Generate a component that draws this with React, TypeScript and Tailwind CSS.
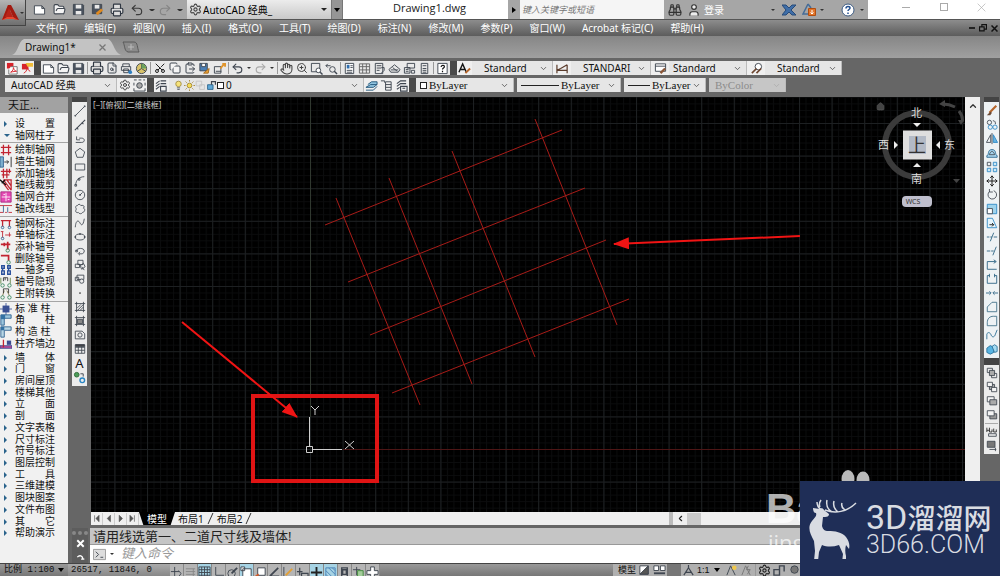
import { type ReactNode } from 'react';
import {
  Binoculars,
  ChevronDown,
  ChevronLeft,
  ChevronUp,
  ClipboardPaste,
  Copy,
  FileSearch,
  FolderOpen,
  Hand,
  House,
  Move,
  Printer,
  Redo2,
  Save,
  Scissors,
  Settings,
  Undo2,
  User,
  ZoomIn,
} from 'lucide-react';

const MENUS = ['文件(F)', '编辑(E)', '视图(V)', '插入(I)', '格式(O)', '工具(T)', '绘图(D)', '标注(N)', '修改(M)', '参数(P)', '窗口(W)', 'Acrobat 标记(C)', '帮助(H)'];

// 14x14 line icon
function Ic({ children, size = 13, stroke = '#3f4650' }: { children: ReactNode; size?: number; stroke?: string }) {
  return (
    <svg width={size} height={size} viewBox="0 0 14 14" fill="none" stroke={stroke} strokeWidth="1" className="shrink-0">
      {children}
    </svg>
  );
}

const page = (
  <Ic>
    <path d="M1.500 3h8l3 3v6h-11zM9.500 3v3h3" fill="#fff" />
  </Ic>
);
const folder = <FolderOpen size={13} color="#3f4650" fill="#f4f4f4" />;
const disk = (
  <Ic>
    <path d="M1.500 1.500h10l1 1v10h-11z" fill="#4a525e" />
    <path d="M4 2h6v4H4zM4 8.500h6v4H4z" fill="#e8e8e8" stroke="none" />
  </Ic>
);
const printer = <Printer size={14} color="#2f3742" fill="#ddd" />;
const dot = <span className="block border-x-2 border-t-2 border-x-transparent border-t-[#333]" />;

type Item = { id: string; icon: ReactNode; narrow?: boolean } | 'sep';

const STANDARD: Item[] = [
  { id: '新建', icon: page },
  { id: '打开', icon: folder },
  { id: '保存', icon: disk },
  'sep',
  { id: '打印', icon: printer },
  { id: '打印预览', icon: <FileSearch size={12} color="#3f4650" /> },
  { id: '发布', icon: <Ic><path d="M3 5V2h7v3M1.500 5h10v4h-10zM4 7.500h5v4H4z" /><circle cx="11" cy="11" r="2" fill="#2f7fc1" stroke="none" /></Ic> },
  { id: '3DDWF', icon: <Ic><circle cx="7" cy="7" r="5.500" fill="#d9c36a" /><path d="M7 1.500v5.500l4.500 3M7 7 2.500 10" /><path d="M7 2a5 5 0 0 1 5 5H7z" fill="#6ba35c" stroke="none" /></Ic> },
  'sep',
  { id: '剪切', icon: <Scissors size={12} color="#222" className="-rotate-90" /> },
  { id: '复制', icon: <Copy size={12} color="#3f4650" fill="#f4f4f4" /> },
  { id: '粘贴', icon: <ClipboardPaste size={12} color="#3f4650" /> },
  { id: '特性匹配', icon: <Ic><path d="M2 1.500h8v8H2z" fill="#4b7fb5" /><path d="M4 2v3h4V2" fill="#fff" /><path d="m6 12 6-5-1 5z" fill="#e8a33a" stroke="#a86a1c" /></Ic> },
  { id: '块编辑器', icon: <Ic><path d="M1.500 5h7v7h-7zM3 10h6" /><path d="m8 7 4-5M10 2h3v3" stroke="#e0952c" strokeWidth="2" /></Ic> },
  'sep',
  { id: '放弃', icon: <Undo2 size={13} color="#3f4650" /> },
  { id: '放弃列表', icon: dot, narrow: true },
  { id: '重做', icon: <Redo2 size={13} color="#aaa" /> },
  { id: '重做列表', icon: dot, narrow: true },
  'sep',
  { id: '平移', icon: <Hand size={13} color="#444" /> },
  { id: '实时缩放', icon: <ZoomIn size={12} color="#444" /> },
  { id: '窗口缩放', icon: <Ic><path d="M1.500 1.500h9v9h-9z" /><circle cx="9" cy="9" r="2.500" fill="#fff" /><path d="m11 11 2.500 2.500" strokeWidth="1.500" /></Ic> },
  { id: '缩放上一个', icon: <Ic><path d="M1 4h5M1 4l2-2M1 4l2 2" /><circle cx="8" cy="8" r="3" /><path d="m10 10 3 3" strokeWidth="1.500" /></Ic> },
  'sep',
  { id: '特性', icon: <Ic><path d="M2.500 1.500h9v11h-9z" fill="#fff" /><path d="M4 3h3v4H4z" fill="#2f6faf" stroke="none" /><path d="M8 4h2.500M8 6h2.500M4 9h6M4 11h6" /></Ic> },
  { id: '设计中心', icon: <Ic><path d="M1.500 2h11v10h-11zM1.500 5h11M1.500 8.500h11M5 2v10M9 2v10" stroke="#666" /></Ic> },
  { id: '工具选项板', icon: <Ic><path d="M2.500 1.500h8v11h-8zM4 4h5M4 6.500h5M4 9h3" /><path d="M9 6h3v3l-3 3" /></Ic> },
  { id: '图纸集', icon: <Ic><path d="m1 8 6-5 6 5-2 3H3zM3 8.500h8M5 6l5 4" /></Ic> },
  { id: '标记集', icon: <Ic><path d="M4.500 1.500h8v5h-8zM1.500 6h6v6h-6zM9 9h3.500v3H9zM3 8h3M3 10h3" /></Ic> },
  { id: '计算器', icon: <Ic><path d="M3.500 1.500h7v11h-7zM5 4h4M5 7h4M5 9h4M5 11h4" /></Ic> },
  'sep',
  { id: '帮助', icon: <Ic><path d="M2 1.500h10v11H2z" fill="#fff" /><path d="M5.500 5.500c0-2.500 3.500-2.500 3.500-.5 0 1.500-2 1.500-2 3M7 9.500V11" stroke="#111" strokeWidth="1.300" /></Ic> },
];

const DRAW: [string, ReactNode][] = [
  ['直线', <path d="m2 12 10-10M1 12h1v1H1zM12 1h1v1h-1z" />],
  ['构造线', <path d="m1 13 12-12M3 10l2 2M9 4l2 2" strokeWidth="1.200" />],
  ['多段线', <path d="M2 11h7c4 0 4-5 0-5H6M3 4v4h4" />],
  ['多边形', <path d="m7 1.500 5.500 4.200-2 6.300h-7l-2-6.300z" />],
  ['矩形', <path d="M1.500 3.500h11v7h-11z" />],
  ['圆弧', <path d="M2 12C2 6 6 2 12 2M1 11h2v2H1zM5 4h2v2H5z" />],
  ['圆', <><circle cx="7" cy="7" r="5.500" /><path d="m7 7 3-3M6.500 6.500h1v1h-1z" /></>],
  ['修订云线', <path d="M4 3c1-2 3-2 4 0 3-1 5 1 3 3 3 1 1 5-1 5-1 2-4 2-5 0-3 1-4-2-2-4C1 5 2 3 4 3z" />],
  ['样条曲线', <path d="M1.500 12C2 4 5 3 7 7s4 2 5-5" />],
  ['椭圆', <><ellipse cx="7" cy="7" rx="5.500" ry="3.500" /><path d="M1 6.500h1v1H1zM12 6.500h1v1h-1zM6.500 3h1v1h-1z" /></>],
  ['椭圆弧', <path d="M3 7c0-4 9-4 9 0 0 3-3 4-6 3M7 8l-2 2 2 2M2 6h2v2H2z" />],
  ['插入块', <path d="M4.500 1.500h6v5h-6zM1.500 6h5v4h-5zM7 8l4-3 2 4-4 3zM9 9l3 4" />],
  ['创建块', <><path d="M3.500 2.500h8v5h-8zM1.500 5h4v4h-4z" fill="#eee" /><circle cx="9" cy="9.500" r="2.500" fill="#eee" /></>],
  ['点', <circle cx="7" cy="7" r="1" fill="#333" stroke="none" />],
  ['图案填充', <path d="M3 1v12M11 1v12M1 3h12M1 11h12M4 8l4-4M4 11l7-7M7 11l4-4" />],
  ['渐变色', <><path d="M3 1v12M11 1v12M1 3h12M1 11h12" /><path d="M4 5h6v5H4z" fill="#888" /></>],
  ['面域', <><path d="M1.500 2.500h8l3 3v6h-11z" /><circle cx="7" cy="7" r="2.500" /></>],
  ['表格', <><path d="M1.500 2h11v10h-11zM1.500 5h11M1.500 8.500h11M5 4v8M9 4v8" /><path d="M2 2h10v2H2z" fill="#444" /></>],
];

const MODIFY: [string, ReactNode][] = [
  ['删除', <><path d="M4 9 12 1" stroke="#b5652b" strokeWidth="2.500" /><path d="M1 12h4l2-3-2-1z" fill="#6a4a35" stroke="none" /></>],
  ['复制对象', <><circle cx="4" cy="4" r="2.500" /><circle cx="5" cy="9.500" r="2.500" stroke="#2a86c4" /><circle cx="10.500" cy="9.500" r="2.500" stroke="#2a86c4" /><path d="M8 2c3 0 3 2 3 4" /></>],
  ['镜像', <><path d="M5.500 2v9h-5z" /><path d="M8.500 2v9h5z" fill="#65b5e4" stroke="#2a86c4" /><path d="M7 0v13" /></>],
  ['偏移', <><path d="M1 12h12v-2c-3 0 0-7-6-7s-3 7-6 7z" fill="#a8d6ef" stroke="#26648c" /><path d="M4 9h6c-1-5-5-5-6 0z" /></>],
  ['阵列', <><path d="M1.500 1.500h4v4h-4z" /><path d="M8.500 1.500h4v4h-4zM1.500 8.500h4v4h-4zM8.500 8.500h4v4h-4z" stroke="#2a86c4" fill="#cfe8f4" /></>],
  ['移动', <Move size={14} x={0} y={0} color="#222" />],
  ['旋转', <path d="M4 3a5 5 0 1 0 5-1M4 0v3.500h4" />],
  ['缩放', <><path d="M1.500 1.500h11v11h-11z" fill="#9fd3ec" stroke="#2a86c4" /><path d="M1.500 6.500h6v6h-6z" fill="#fff" /></>],
  ['拉伸', <><path d="M1.500 1.500h6l5 11h-11z" stroke="#2a86c4" fill="#e5f4fb" /><path d="M4 9h5M7 7l2 2-2 2" stroke="#111" /></>],
  ['修剪', <path d="M1 7h3M5 7h2M9 7h4M5 12 9 2" stroke="#28607f" />],
  ['延伸', <path d="M1 7h4M6 7h3M8 12l4-10" stroke="#28607f" />],
  ['打断于点', <path d="M11 3H1.500v9h11M9 1l3 2-3 2" stroke="#245d80" />],
  ['打断', <path d="M4 3H1.500v9h11V3H10M4 1v4M10 1v4" stroke="#245d80" />],
  ['合并', <path d="M0 7h5M14 7H9M4 5l2 2-2 2M10 5 8 7l2 2" stroke="#245d80" />],
  ['倒角', <path d="M1.500 12.500V7L7 1.500h5.500v11z" stroke="#3d6d85" />],
  ['圆角', <path d="M1.500 12.500V9c0-5 3-7.500 7-7.500h4v11z" stroke="#3d6d85" />],
  ['光顺曲线', <path d="M1 12V6c1-3 4-2 5 1s4 3 5-1l2-5" stroke="#266a91" />],
  ['分解', <><path d="m1 6 4-3 4 2v6l-4 2-4-2z" fill="#58b4e2" stroke="#256f99" /><path d="m7 4 3-2 3 2v6l-3 1z" fill="#a3daf2" stroke="#256f99" /></>],
];

const ORDER: [string, ReactNode][] = [
  ['前置', <><path d="M1.500 1.500h6v5h-6zM6.500 7.500h6v5h-6z" /><path d="M4 4h6v6H4z" fill="#aaa" /></>],
  ['后置', <><path d="M4 4h6v6H4z" fill="#aaa" /><path d="M1.500 1.500h6v5h-6zM6.500 7.500h6v5h-6z" fill="#f4f4f4" /></>],
  ['置于对象之上', <><path d="M1.500 2h8v6h-8z" fill="#f4f4f4" /><path d="M4.500 5.500h8v6h-8z" fill="#aaa" /></>],
  ['置于对象之下', <><path d="M4.500 5.500h8v6h-8z" fill="#999" /><path d="M1.500 2h8v6h-8z" fill="#f4f4f4" /></>],
];

const ORDER_MORE: [string, ReactNode][] = [
  ['文字前置', <><path d="M1 2v5M4 2v5h3V4M1 5h3M9 3v4h3V4" stroke="#222" /><path d="M3 9h9v3H3z" /></>],
  ['图案填充后置', <><path d="M1.500 1.500h9v7h-9z" fill="#777" /><path d="M4 11h8M11 9v4" /></>],
];

const RED = '#c22432';
const BLUE = '#2c5f8f';

type Entry = { name: string; icon?: ReactNode; open?: boolean };

const PALETTE: Entry[][] = [
  [{ name: '设　　置' }, { name: '轴网柱子', open: true }],
  [
    { name: '绘制轴网', icon: <path d="M4 1v12M10 1v12M1 4h12M1 10h12" stroke={RED} strokeWidth="1.500" /> },
    { name: '墙生轴网', icon: <><path d="M0 1h4v12H0z" fill="#7fb0cf" stroke={BLUE} /><path d="M5 7h5M8 5l2 2-2 2M13 1v12" stroke="#222" /></> },
    { name: '添加轴线', icon: <path d="M4 1v11M8 1v11M1 4h12M2 8h9M11 1v5" stroke={RED} strokeWidth="1.500" /> },
    { name: '轴线裁剪', icon: <><path d="M4 1h9v12M4 1l9 12M8 1l5 7M4 5l6 8" stroke={RED} strokeWidth="1.500" /><path d="m0 1 7 6M2 5l4-4" stroke="#111" strokeWidth="1.500" /></> },
    { name: '轴网合并', icon: <><path d="M1 1h12v12H1z" fill="#e44ab4" stroke="#a5287c" /><path d="M2 7h10M7 2v10M4 4h2M9 10h2" stroke="#fff" /></> },
    { name: '轴改线型', icon: <><path d="M0 3h14M0 11h4M6 11h2M10 11h4" stroke={RED} /><path d="M4 3v8M9 5v6" stroke={BLUE} /></> },
  ],
  [
    { name: '轴网标注', icon: <><path d="M1 3h12M3 3v7M11 3v7" stroke={RED} strokeWidth="1.500" /><circle cx="3" cy="11" r="1.500" stroke={BLUE} /><circle cx="11" cy="11" r="1.500" stroke={BLUE} /></> },
    { name: '单轴标注', icon: <><path d="M3 3v7M1 3h3M6 7h7M11 4v5" stroke={RED} /><circle cx="3" cy="11" r="1.500" stroke={BLUE} /></> },
    { name: '添补轴号', icon: <><path d="M1 4h11M9 1v9M5 2v4" stroke={RED} strokeWidth="2" /><circle cx="9" cy="11" r="2" stroke="#36875e" /></> },
    { name: '删除轴号', icon: <><path d="M1 3h9v6" stroke={RED} strokeWidth="2" /><circle cx="10" cy="11" r="2" stroke="#36875e" /></> },
    { name: '一轴多号', icon: <path d="M2 2h3v3H2zM9 2h3v3H9zM2 8h3v4H2zM9 8h3v4H9zM3 5v3M10 5v3" stroke="#284f9b" strokeWidth="1.600" /> },
    { name: '轴号隐现', icon: <><path d="M1 2v7M12 2v7" stroke="#5b7f3e" /><path d="M4 6V2h5v4M6 2v3" stroke="#333" /><circle cx="3" cy="11" r="2" stroke="#36875e" /><circle cx="11" cy="11" r="2" stroke="#36875e" /></> },
    { name: '主附转换', icon: <><path d="m3 9 2-6M8 3l3 6" stroke="#7c7240" /><path d="M4 6V1h6v5" stroke="#333" /><circle cx="3" cy="11" r="2" stroke="#36875e" /><circle cx="11" cy="11" r="2" stroke="#36875e" /></> },
  ],
  [
    { name: '标 准 柱', icon: <><path d="M3 3h8v8H3z" fill="#3a4f93" stroke="none" /><path d="M7 0v14M0 7h14" stroke="#3a4f93" /></> },
    { name: '角　　柱', icon: <><path d="M1 13V1h12v4H5v8z" fill="#9cc6dd" stroke={BLUE} /><path d="M1 1h5v5H1z" fill="#3471a3" stroke="none" /></> },
    { name: '构 造 柱', icon: <><path d="M1 13V1h12v4H5v8z" fill="#b8d6e4" stroke={BLUE} /><path d="M1 1h4v4H1z" fill="#3471a3" stroke="none" /></> },
    { name: '柱齐墙边', icon: <><path d="M0 9h14v3H0z" fill="#b94a9a" stroke="#3b4c90" /><path d="M8 3h5v5H8z" fill="#3b4c90" stroke="none" /><path d="M4 2v9" stroke={RED} strokeWidth="1.500" /></> },
  ],
];

const CLOSED = ['墙　　体', '门　　窗', '房间屋顶', '楼梯其他', '立　　面', '剖　　面', '文字表格', '尺寸标注', '符号标注', '图层控制', '工　　具', '三维建模', '图块图案', '文件布图', '其　　它', '帮助演示'];

function Combo({ label, value, className, prefix, serif, disabled }: {
  label: string; value: string; className: string; prefix?: ReactNode; serif?: boolean; disabled?: boolean;
}) {
  return (
    <div className={`relative flex items-center gap-[2px] border-r border-[#bbb] pl-1 ${disabled ? 'bg-[#c6c6c6]' : 'bg-[#e6e6e6]'} ${className}`}>
      {prefix}
      <select
        aria-label={label}
        disabled={disabled}
        className={`h-[14px] min-w-0 flex-1 appearance-none bg-transparent leading-[14px] ${serif ? "font-['Liberation_Serif'] text-[11px]" : 'text-[10px]'} ${disabled ? 'text-[#8c8c8c]' : 'text-[#111]'}`}
      >
        <option>{value}</option>
      </select>
      <ChevronDown size={9} color={disabled ? '#aaa' : '#444'} className="pointer-events-none absolute right-1" />
    </div>
  );
}

function ToolButton({ label, children, className = 'w-[15px]' }: { label: string; children: ReactNode; className?: string }) {
  return (
    <button aria-label={label} title={label} className={`flex h-[14px] shrink-0 items-center justify-center ${className}`}>
      {children}
    </button>
  );
}

const Sep = () => <span className="mx-px h-3 w-px shrink-0 bg-[#999]" />;
const Grip = () => <span className="w-[7px] shrink-0 bg-[#4a4a4a]" />;

function TitleBar() {
  return (
    <header className="relative flex h-5 shrink-0 border-b border-[#555] bg-[#a6a6a6]">
      <button aria-label="应用程序菜单" className="absolute top-0 left-0 z-10 flex h-[26px] w-[26px] items-center border-r border-b border-[#444] bg-linear-to-b from-[#b5b5b5] to-[#6f6f6f]">
        <svg width="20" height="22" viewBox="0 0 20 22">
          <path d="M2 18 8 3h3l-5 12z" fill="#e2452b" />
          <path d="M8 3h3l8 15-5-1-4-9-3 8-5 2z" fill="#a31a10" />
          <path d="m5 15 4-9 4 9z" fill="#b92318" />
          <path d="m2 18 5-3h6l5 3-5-1H7z" fill="#e8472f" />
        </svg>
        {dot}
      </button>
      <div className="ml-[30px] flex items-center">
        <ToolButton label="新建图形" className="w-[19px]">{page}</ToolButton>
        <ToolButton label="打开图形" className="w-[20px]">{folder}</ToolButton>
        <ToolButton label="保存图形" className="w-[19px]">{disk}</ToolButton>
        <ToolButton label="另存为" className="w-[19px]">
          <Ic><path d="M1.500 1.500h10v10h-10z" fill="#4a525e" /><path d="M4 2h5v4H4z" fill="#e8e8e8" stroke="none" /><path d="m6 12 6-5" stroke="#e08a20" strokeWidth="3" /></Ic>
        </ToolButton>
        <ToolButton label="打印图形" className="w-[20px]">{printer}</ToolButton>
        <ToolButton label="撤销" className="w-[20px]"><Undo2 size={14} color="#3a3a3a" /></ToolButton>
        <span className="w-2 pl-[2px]">{dot}</span>
        <ToolButton label="恢复" className="w-[20px]"><Redo2 size={14} color="#858585" /></ToolButton>
        <span className="w-2 pl-[2px]">{dot}</span>
      </div>
      <div className="relative ml-1 flex w-[144px] items-center bg-linear-to-b from-[#ececec] to-[#c9c9c9] pl-[2px]">
        <Settings size={13} color="#444" />
        <select aria-label="工作空间" className="h-4 flex-1 appearance-none pl-px text-[10px] leading-4 text-black">
          <option>AutoCAD 经典_</option>
        </select>
        <span className="pointer-events-none absolute right-1 border-x-[3px] border-t-[3px] border-x-transparent border-t-[#222]" />
      </div>
      <button aria-label="自定义快速访问工具栏" className="flex w-3 items-center justify-center border-x border-[#777] bg-[#959595]">
        <span className="border-x-[3px] border-t-4 border-x-transparent border-t-black" />
      </button>
      <h1 className="flex-1 bg-white pl-2 text-center font-['Open_Sans'] text-[11px] leading-4 text-[#222]">Drawing1.dwg</h1>
      <button aria-label="展开搜索" className="flex w-3 items-center justify-center">
        <span className="border-y-[3px] border-l-4 border-y-transparent border-l-black" />
      </button>
      <input aria-label="搜索" placeholder="键入关键字或短语" className="w-[144px] bg-[#f5f5f5] px-[2px] text-[9px] italic outline-none placeholder:text-[#777]" />
      <div className="flex w-[204px] items-center pl-[3px]">
        <ToolButton label="查找"><Binoculars size={14} color="#333" /></ToolButton>
        <ToolButton label="用户" className="ml-1 w-[15px]"><User size={14} color="#333" fill="#eee" /></ToolButton>
        <a href="#login" className="ml-[3px] text-[10px] leading-4 text-white">登录</a>
        <span className="ml-auto">{dot}</span>
        <ToolButton label="Exchange" className="ml-[6px] w-4">
          <svg width="14" height="12" viewBox="0 0 14 12">
            <path d="M0 1h4l3 3 3-3h4L9 6l5 5h-4L7 8l-3 3H0l4-5z" fill="#3f6ea8" stroke="#274a78" />
          </svg>
        </ToolButton>
        <ToolButton label="更新" className="ml-1 w-4">
          <Ic size={14}><path d="M6 1 1 11h6M6 1l3 4" stroke="#456c98" strokeWidth="1.500" /><path d="M6.500 5.500h7v7h-7z" fill="#e4762a" stroke="#b04d10" /><path d="M10 7v4M8.500 9.500 10 11l1.500-1.500" stroke="#fff" /></Ic>
        </ToolButton>
        <span className="ml-[3px]">{dot}</span>
        <ToolButton label="帮助主题" className="mr-1 ml-4 w-4">
          <Ic size={14}><circle cx="7" cy="7" r="6" fill="#fff" stroke="#3d5c83" /><path d="M5 5.500c0-3 4-2.500 4-.5 0 1.500-2 1.500-2 3M7 9.500V11" stroke="#234f8f" strokeWidth="1.500" /></Ic>
        </ToolButton>
        <span className="mr-1">{dot}</span>
      </div>
      <div className="flex w-[132px] justify-between bg-white pt-[3px] pr-[14px] pl-[34px]">
        <button aria-label="最小化" className="flex h-2 w-2 items-center"><span className="h-px w-2 bg-[#aaa]" /></button>
        <button aria-label="最大化" className="h-2 w-2 border border-[#aaa]" />
        <button aria-label="关闭" className="h-2"><Ic size={9} stroke="#aaa"><path d="m1 1 12 12M13 1 1 13" /></Ic></button>
      </div>
    </header>
  );
}

function Toolbars() {
  return (
    <div className="flex shrink-0 flex-col gap-[3px] bg-[#666] pt-[3px] pb-[5px] pl-[5px]">
      <div className="flex h-[14px]">
        <div className="flex bg-[#efefef]">
          <ToolButton label="转换为 PDF">
            <Ic><path d="M1 1h7v6H1z" fill="#d6232b" stroke="none" /><path d="M5 5h7v8H3V8" fill="#fff" stroke="#777" /><path d="M5 11c3-1 3-5 3-5s1 4 3 4-3 0-6 1z" stroke="#d6232b" /></Ic>
          </ToolButton>
          <ToolButton label="批量转换 PDF" className="w-[14px]">
            <Ic><path d="M1 2h7v6H1z" fill="#d6232b" stroke="none" /><path d="M5 1h8v4H7z" fill="#f1bd38" stroke="none" /><path d="M3 12c3-1 4-6 4-6s1 4 3 4" stroke="#d6232b" /></Ic>
          </ToolButton>
        </div>
        <Grip />
        <div className="flex items-center bg-[#e9e9e9]">
          {STANDARD.map((it, i) =>
            it === 'sep' ? <Sep key={i} /> : (
              <ToolButton key={it.id} label={it.id} className={it.narrow ? 'w-2' : 'w-[15px]'}>{it.icon}</ToolButton>
            ),
          )}
        </div>
        <Grip />
        <div className="flex items-center bg-[#efefef]">
          <ToolButton label="文字样式管理"><Ic><path d="m1 11 4-9 4 9M3 8h4" stroke="#111" strokeWidth="1.500" /><path d="m8 12 5-5" stroke="#b5652b" strokeWidth="2" /></Ic></ToolButton>
          <Combo label="文字样式" value="Standard" className="w-[81px] pl-[12px]" />
          <ToolButton label="标注样式管理" className="w-[18px]"><Ic><path d="M1 3v9M1 9h11M12 3v9M1 9l4-2M5 7l7-4" stroke="#5b3c2c" strokeWidth="1.300" /></Ic></ToolButton>
          <Combo label="标注样式" value="STANDARI" className="w-[80px] pl-[12px]" />
          <ToolButton label="表格样式管理" className="w-[18px]"><Ic><path d="M1.500 2h11v8h-11zM1.500 4.500h11" fill="#fff" /><path d="m7 12 5-5" stroke="#8b5535" strokeWidth="2.500" /></Ic></ToolButton>
          <Combo label="表格样式" value="Standard" className="w-[78px]" />
          <ToolButton label="多重引线样式管理" className="w-[18px]"><Ic><circle cx="9" cy="5" r="3.500" fill="#fff" /><path d="m2 12 5-5M7 12l5-5" stroke="#6d4630" strokeWidth="1.800" /></Ic></ToolButton>
          <Combo label="多重引线样式" value="Standard" className="w-[77px] pl-[12px]" />
        </div>
      </div>
      <div className="flex h-[14px]">
        <div className="flex bg-[#efefef]">
          <Combo label="切换工作空间" value="AutoCAD 经典" className="w-[112px] pl-[6px]" />
          <ToolButton label="工作空间设置"><Settings size={12} color="#444" /></ToolButton>
          <ToolButton label="我的工作空间"><Ic><path d="M1 1h3M6 1h3M11 1h2M1 4v3M1 10v3M13 4v3M13 10v3M1 13h12" /><circle cx="7" cy="7" r="3" fill="#aaa" /></Ic></ToolButton>
        </div>
        <Grip />
        <div className="flex bg-[#efefef]">
          <ToolButton label="图层特性管理器"><Ic><path d="M6 2h6M6 5h6M6 8h6v5H6zM1 5l4-3M1 8l4-3M1 11l4-3" strokeWidth="1.200" /></Ic></ToolButton>
          <Combo
            label="图层"
            value="0"
            className="w-[195px]"
            prefix={
              <span className="flex items-center">
                <Ic size={11}><circle cx="7" cy="5" r="3.500" fill="#f6e27a" stroke="#9b8436" /><path d="M5 10h4M5.500 12h3" /></Ic>
                <Ic size={11}><circle cx="7" cy="7" r="3" fill="#f3dc5c" stroke="#9b7c22" /><path d="M7 0v2M7 12v2M0 7h2M12 7h2M2 2l1.500 1.500M10.500 10.500 12 12M12 2l-1.500 1.500M2 12l1.500-1.500" stroke="#9b7c22" /></Ic>
                <Ic size={11} stroke="#c2c2c2"><path d="M1.500 1.500h7v6h-7zM6 6h6v6H6z" /></Ic>
                <Ic size={11}><path d="M2 6h7v6H2z" fill="#5fa8d7" stroke="#205c86" /><path d="M7 6V2h5v4" strokeWidth="1.500" /></Ic>
                <span className="h-[7px] w-[7px] border border-[#222] bg-white" />
              </span>
            }
          />
          <ToolButton label="置为当前"><Ic><path d="m1 9 5-3h7l-4 3zM3 6l4-3h6v3" fill="#8fc3df" stroke="#24587b" /><path d="m1 12h8l4-4" stroke="#24587b" /></Ic></ToolButton>
          <ToolButton label="上一个图层"><Ic><path d="M1 2h4v2M6 3h6v9H6zM6 6h6M6 9h6" /></Ic></ToolButton>
          <ToolButton label="图层状态"><Ic><path d="m2 5 4-3h6M2 8l4-3h6M2 11l3-2M6 8h7v5H6zM8 10h3" strokeWidth="1.200" /></Ic></ToolButton>
        </div>
        <Grip />
        <div className="flex">
          <Combo serif label="颜色" value="ByLayer" className="w-[98px]" prefix={<span className="h-[7px] w-[7px] border border-[#222] bg-white" />} />
          <Combo serif label="线型" value="ByLayer" className="ml-[3px] w-[104px]" prefix={<span className="h-px w-[38px] bg-[#222]" />} />
          <Combo serif label="线宽" value="ByLayer" className="ml-[3px] w-[82px]" prefix={<span className="h-px w-[22px] bg-[#222]" />} />
          <Combo serif disabled label="打印样式" value="ByColor" className="ml-[3px] w-[77px] pl-[6px]" />
        </div>
      </div>
    </div>
  );
}

function Palette() {
  return (
    <aside className="flex w-[68px] shrink-0 flex-col bg-[#f1f1f1]">
      <h2 className="h-4 bg-[#a2a2a2] pl-2 text-[11px] leading-4 text-[#111]">天正...</h2>
      <ul className="flex flex-1 flex-col pt-[5px] pb-6 font-['Liberation_Sans','Noto_Sans_CJK_SC',sans-serif] text-[10px] text-[#111]">
        {[...PALETTE, CLOSED.map((name): Entry => ({ name }))].map((group, g) => (
          <li key={g} className="contents">
            {g > 0 && <hr className={`my-px border-0 ${g < 4 ? 'h-px shrink-0 bg-[#a5a5a5]' : 'h-0'}`} />}
            {group.map((e) => (
              <button key={e.name} className="flex min-h-0 flex-1 items-center text-left leading-none whitespace-pre">
                <span className="flex w-[15px] shrink-0 items-center">
                  {e.icon ? (
                    <Ic size={12}>{e.icon}</Ic>
                  ) : e.open ? (
                    <span className="ml-1 border-x-[3px] border-t-[3px] border-x-transparent border-t-[#2a638b]" />
                  ) : (
                    <span className="ml-1 border-y-[3px] border-l-[3px] border-y-transparent border-l-[#2a638b]" />
                  )}
                </span>
                {e.name}
              </button>
            ))}
          </li>
        ))}
      </ul>
    </aside>
  );
}

function IconColumn({ items }: { items: [string, ReactNode][] }) {
  return items.map(([name, shape]) => (
    <ToolButton key={name} label={name}><Ic size={12}>{shape}</Ic></ToolButton>
  ));
}

const AXES = [
  [234, 128, 471, 33], [257, 185, 494, 91], [279, 238, 515, 143], [301, 296, 538, 202],
  [245, 101, 329, 308], [298, 81, 381, 287], [361, 54, 444, 260], [444, 22, 526, 228],
];

function Drawing() {
  return (
    <div className="relative flex-1 overflow-hidden bg-black">
      <svg className="absolute inset-0 h-full w-full">
        <defs>
          <pattern id="minor" x="219" y="352" width="6.520" height="6.520" patternUnits="userSpaceOnUse">
            <path d="M.5 0v6.520M0 .5h6.520" stroke="#0b0c0d" />
          </pattern>
          <pattern id="major" x="219" y="352" width="32.600" height="32.600" patternUnits="userSpaceOnUse">
            <path d="M.5 0v32.600M0 .5h32.600" stroke="#1d2022" />
          </pattern>
          <marker id="head" markerUnits="userSpaceOnUse" markerWidth="18" markerHeight="14" refX="15" refY="6" orient="auto">
            <path d="M0 0 16 6 0 12z" fill="#f01414" />
          </marker>
        </defs>
        <rect width="100%" height="100%" fill="url(#minor)" />
        <rect width="100%" height="100%" fill="url(#major)" />
        <path d="M219.500 0v320" stroke="#30382f" />
        <line x1="252" y1="352.500" x2="100%" y2="352.500" stroke="#4e1616" />
        {AXES.map(([x1, y1, x2, y2], i) => (
          <line key={i} x1={x1} y1={y1} x2={x2} y2={y2} stroke="#a81c18" />
        ))}
        <g stroke="#cfcfcf" fill="none">
          <path d="M218.500 320v30M222 352.500h29M215.500 349.500h6v6h-6z" />
          <path d="m220 309 4 4 4-4M224 313v5M254 344l9 8M263 344l-9 8" />
        </g>
        <rect x="162" y="299" width="124" height="85" fill="none" stroke="#e01414" strokeWidth="4" />
        <g stroke="#f01414" strokeWidth="2">
          <line x1="709" y1="139" x2="523" y2="147" markerEnd="url(#head)" />
          <line x1="91" y1="225" x2="206" y2="320" markerEnd="url(#head)" />
        </g>
      </svg>
      <p className="relative pt-[2px] pl-[2px] text-[8px] leading-3 text-[#ccc]">[−][俯视][二维线框]</p>
      <div className="absolute top-0 right-0 h-[120px] w-[100px] text-[11px] text-[#ddd]">
        <svg className="absolute inset-0" width="100" height="120" viewBox="0 0 100 120">
          <circle cx="52" cy="48" r="32" fill="none" stroke="#3b3b3b" strokeWidth="6" />
          <path d="M38 33.500h29v29H38z" fill="#dedede" />
          <path d="M44 39h17v18H44z" fill="#b3bac6" />
          <path d="m48 26h8l-4 4zM48 70h8l-4-4zM29 44v8l4-4zM75 44v8l-4-4z" fill="#eee" />
          <path d="M78 7c5 0 8 1 12 3M94 14c3 4 4 8 3 11" fill="none" stroke="#444" strokeWidth="3" />
          <path d="m80 3-6 4 6 3zM93 23l6 0-3 5zM88 82h7l-3.500 4z" fill="#444" />
        </svg>
        <House size={9} fill="#444" color="#555" className="absolute top-[5px] left-[11px]" />
        <button className="absolute top-[9px] left-[46px] leading-[14px]">北</button>
        <button className="absolute top-[75px] left-[46px] leading-[14px]">南</button>
        <button className="absolute top-[41px] left-[13px] leading-[14px]">西</button>
        <button className="absolute top-[41px] left-[79px] leading-[14px]">东</button>
        <button className="absolute top-[38px] left-[43px] text-[18px] leading-5 text-[#333]">上</button>
        <button className="absolute top-[99px] left-[37px] h-[11px] w-[30px] rounded-sm bg-[#bfbfcd] pr-2 text-[7px] leading-[11px] text-[#333]">WCS</button>
      </div>
    </div>
  );
}

function LayoutTabs() {
  const arrows = ['M4 2v10M11 2 6 7l5 5z', 'M10 2 5 7l5 5z', 'm5 2 5 5-5 5z', 'M10 2v10M3 2l5 5-5 5z'];
  return (
    <div className="flex h-[13px] items-center bg-[#efefef] text-[10px] leading-3 text-[#111]">
      {arrows.map((d, i) => (
        <button key={d} aria-label={`布局导航 ${i + 1}`} className="flex h-3 w-3 items-center justify-center border-r border-[#ccc]">
          <Ic size={9} stroke="#555"><path d={d} fill="#555" /></Ic>
        </button>
      ))}
      <button className="h-[13px] bg-black px-2 leading-3 text-white [clip-path:polygon(0_0,100%_0,88%_100%,12%_100%)]">模型</button>
      <button className="px-[3px]">布局1</button>
      <span className="mx-[3px] h-[11px] w-px -skew-x-24 bg-[#333]" />
      <button className="px-[3px]">布局2</button>
      <span className="mx-[3px] h-[11px] w-px -skew-x-24 bg-[#333]" />
      <span className="flex-1" />
      <div className="flex h-full w-[296px] items-center">
        <span className="h-full w-1 bg-[#bbb]" />
        <button aria-label="向左滚动" className="flex w-[14px] justify-center"><ChevronLeft size={9} color="#222" strokeWidth={3} /></button>
        <span className="h-3 w-[14px] bg-[#c9c9c9]" />
      </div>
    </div>
  );
}

function CommandWindow() {
  return (
    <section className="flex h-[38px] shrink-0 bg-[#666] pt-[3px]">
      <div className="mr-[2px] ml-1 flex w-4 flex-col items-center bg-[#5d5d5d]">
        <span className="h-[7px] w-full border-b-4 border-dotted border-[#888]" />
        <button aria-label="关闭命令行" className="mt-1"><Ic size={9} stroke="#fff"><path d="m2 2 10 10M12 2 2 12" strokeWidth="3" /></Ic></button>
        <span className="mt-1"><Ic size={9} stroke="#fff"><path d="M2 8c4-4 8-2 9 3M8 11h5" strokeWidth="2" /></Ic></span>
      </div>
      <div className="flex flex-1 flex-col">
        <p className="h-[17px] border-b border-[#999] bg-[#c5c5c5] pl-[3px] text-[13px] leading-4 text-[#222]">请用线选第一、二道尺寸线及墙体!</p>
        <div className="flex flex-1 items-center gap-1 bg-white pl-[3px]">
          <Ic><path d="M.5 1.500h13v11H.5z" fill="#ddd" stroke="#999" /><path d="m3 4 3 3-3 3M8 10h3" /></Ic>
          {dot}
          <input aria-label="命令" placeholder="键入命令" className="h-4 flex-1 pl-[3px] text-[13px] italic outline-none placeholder:text-[#999]" />
        </div>
      </div>
    </section>
  );
}

const STATUS: [string, ReactNode, boolean?][] = [
  ['推断约束', <path d="M5 1v12M1 6h9M9 5l3 3-3 4" />],
  ['捕捉', <path d="M2 3h10M2 6h10M2 9h10M10 3v8" stroke="#888" />],
  ['栅格', <path d="M1 1h12v12H1zM1 4h12M1 7h12M1 10h12M4 1v12M7 1v12M10 1v12" />, true],
  ['正交', <path d="M4 1v9h9" />],
  ['极轴', <><circle cx="6" cy="8" r="4" /><path d="m6 8 6-6" strokeWidth="2" /></>],
  ['对象捕捉', <path d="M3 3h9v10H3zM1 1h4v4H1z" fill="#fff" />, true],
  ['三维对象捕捉', <><path d="M4 2h8v8H4z" fill="#fff" /><path d="m1 12 4-3" stroke="#d25b2a" strokeWidth="2" /></>],
  ['对象追踪', <path d="m2 11 9-9M3 11h9" strokeWidth="1.800" />],
  ['动态 UCS', <><path d="M2 1v11h10" /><path d="m4 10 7-7" stroke="#e4a035" strokeWidth="2" /></>],
  ['动态输入', <path d="M4 2v8M1 6h6M6 8h7v4H6z" strokeWidth="1.300" />],
  ['线宽', <path d="M7 1v12M1 7h12" strokeWidth="2" stroke="#222" />, true],
  ['透明度', <path d="M2 2h10v10H2zM2 5l7 7M2 9l3 3M5 2l7 7M9 2l3 3" stroke="#4b83b8" />, true],
  ['快捷特性', <path d="M4 2h6v10H4zM5 4h4v5H5z" strokeWidth="1.500" />],
  ['选择循环', <><path d="M5 1v9M1 4h8" /><path d="M6 5h6v8H6z" fill="#a3cc9a" stroke="#438a3c" /></>],
  ['注释监视器', <path d="M5 1h4v4h4v4H9v4H5V9H1V5h4z" fill="#fff" />],
];

function StatusBar() {
  return (
    <footer className="flex h-[13px] shrink-0 items-start overflow-hidden border-t border-[#444] bg-linear-to-b from-[#999] to-[#777] font-['Liberation_Sans','Noto_Sans_CJK_SC',sans-serif] text-[#111]">
      <button className="flex w-[68px] items-center justify-between pl-1 font-['Liberation_Mono','Noto_Sans_CJK_SC',monospace] text-[9px] leading-3 whitespace-nowrap">
        比例 1:100
        <span className="mr-1 border-x-[3px] border-t-4 border-x-transparent border-t-black" />
      </button>
      <span className="h-3 w-[102px] bg-linear-to-b from-[#aaa] to-[#888] pl-[3px] font-['Liberation_Mono'] text-[9px] leading-3 whitespace-nowrap">26517, 11846, 0</span>
      <div className="flex">
        {STATUS.map(([name, shape, on]) => (
          <button key={name} aria-label={name} className={`flex h-4 w-[14px] items-center justify-center border-r border-[#888] ${on ? 'bg-[#a6d3e4]' : 'bg-[#b5b5b5]'}`}>
            <Ic>{shape}</Ic>
          </button>
        ))}
      </div>
      <span className="flex-1" />
      <div className="flex h-3 w-[387px] items-center bg-[#b0b0b0] text-[9px] leading-3">
        <button className="w-6 pl-1">模型</button>
        <ToolButton label="快速查看布局"><Ic><path d="M2 2h9v9H2z" fill="#fff" /><path d="m11 2-9 9h9z" fill="#555" /></Ic></ToolButton>
        <ToolButton label="快速查看图形"><Ic><path d="M1 2h5v5H1zM8 2h5v5H8z" fill="#fff" /><path d="M1 10h12" strokeWidth="2" /></Ic></ToolButton>
        <span className="h-full w-[14px] bg-[#777]" />
        <ToolButton label="注释比例"><Ic><path d="M7 1v3M7 4l-5 8M7 4l5 8M4 9h6" strokeWidth="1.300" /></Ic></ToolButton>
        <span className="pl-px">1:1</span>
        <span className="mx-1 border-x-[3px] border-t-4 border-x-transparent border-t-black" />
        <ToolButton label="注释可见性"><Ic><path d="m6 2-4 10M6 2l5 10" /><circle cx="10" cy="4" r="2.500" fill="#f0c84b" stroke="none" /></Ic></ToolButton>
        <ToolButton label="自动添加比例"><Ic><path d="m6 2-4 10M6 2l5 10M9 2l-2 4h4l-3 5" stroke="#777" /></Ic></ToolButton>
        <Sep />
        <ToolButton label="切换工作空间按钮"><Settings size={13} color="#222" /></ToolButton>
        <ToolButton label="锁定窗口"><Ic><path d="M1 6h6v6H1zM7 6V2h5v6" strokeWidth="1.500" /></Ic></ToolButton>
        <ToolButton label="硬件加速"><Ic><circle cx="7" cy="6" r="4" fill="#777" /></Ic></ToolButton>
      </div>
    </footer>
  );
}

function Brand() {
  return (
    <div className="absolute right-0 bottom-0 z-20">
      <svg className="absolute -top-3 left-10" width="32" height="24" viewBox="0 0 32 24">
        <ellipse cx="8" cy="10" rx="6.500" ry="9" fill="#b9b9b9" />
        <ellipse cx="23" cy="11" rx="6.500" ry="8.500" fill="#b9b9b9" />
      </svg>
      <div aria-hidden className="absolute top-[7px] right-[166px] flex w-[68px] flex-col text-white/70">
        <span className="font-['Liberation_Sans'] text-[42px] leading-[42px] font-bold">Ba</span>
        <span className="pl-[2px] font-['Open_Sans'] text-[22px] leading-6">jing</span>
      </div>
      <div className="relative flex h-[95px] w-[200px] items-center gap-2 bg-[#1f2e57] pl-2 text-[#d9dce2]">
        <svg width="50" height="60" viewBox="0 0 50 60" className="shrink-0">
          <path
            d="M8 9 15 10c1-1 3-1 4 1l5 4c0 3-3 3-6 3l-1 9c1 4 3 5 6 5 7 0 14 1 18 6 3 4 4 8 3 12l-3-4c-1 4-1 7 0 11v7h-4l1-9-4-9c-6 2-12 2-17 0l-3 7-1 9h-4l1-10-1-10C5 35 2 28 7 22c3-4 5-5 4-8-2 0-3-2-3-5z"
            transform="translate(-3 0)"
            fill="currentColor"
          />
          <path d="M14 11c-4-2-5-5-5-8M17 11C27 15 39 13 48 4M24 13c-5-3-6-7-5-12M30 13c-4-3-5-7-4-11M37 11c-3-2-4-4-3-7M12 8C11 6 11 4 13 1" fill="none" stroke="currentColor" strokeWidth="1.500" />
        </svg>
        <div className="whitespace-nowrap">
          <p className="flex items-baseline font-['Noto_Sans_CJK_SC'] text-[28px] leading-8 font-medium">
            <span className="font-['Roboto'] text-[34px] leading-8 font-normal">3D</span>溜溜网
          </p>
          <p className="font-['Roboto'] text-[25px] leading-6 font-light">3D66.COM</p>
        </div>
      </div>
    </div>
  );
}

export default function App() {
  return (
    <div className="relative flex h-screen flex-col overflow-hidden bg-[#666] font-['Noto_Sans','Noto_Sans_CJK_SC',sans-serif]">
      <TitleBar />
      <nav className="flex h-4 shrink-0 items-center gap-[17px] bg-linear-to-b from-[#8d8d8d] to-[#5c5c5c] pl-9 text-[10px] leading-4 text-white">
        {MENUS.map((m) => (
          <button key={m} className="shrink-0 whitespace-nowrap">{m}</button>
        ))}
        <div className="mr-[2px] ml-auto flex items-center gap-1">
          <button aria-label="最小化图形" className="h-[2px] w-[6px] bg-[#222]" />
          <button aria-label="还原图形"><Ic size={8} stroke="#111"><path d="M1 5h8v7H1zM5 4V1h8v8h-4" strokeWidth="2" /></Ic></button>
          <button aria-label="关闭图形"><Ic size={7} stroke="#111"><path d="m1 1 12 12M13 1 1 13" strokeWidth="3" /></Ic></button>
        </div>
      </nav>
      <div className="flex h-[22px] shrink-0 items-center bg-linear-to-b from-[#868686] to-[#a0a0a0] pl-3">
        <div className="relative flex h-4 w-[110px] items-center justify-between pr-4 pl-[13px]">
          <svg className="absolute inset-0 h-full w-full" viewBox="0 0 110 16" preserveAspectRatio="none">
            <path d="M0 16C6 15 6 2 12 0h84c6 2 6 15 14 16z" fill="#c3c3c3" />
          </svg>
          <button className="relative text-[10px] leading-4 text-[#111]">Drawing1*</button>
          <button aria-label="关闭选项卡" className="relative"><Ic size={7} stroke="#777"><path d="m1 1 12 12M13 1 1 13" strokeWidth="2.500" /></Ic></button>
        </div>
        <button aria-label="新图形">
          <svg width="18" height="12" viewBox="0 0 18 12">
            <path d="M1 1h11c4 0 3 6 5 10H6C2 10 3 4 1 1z" fill="#8b8b8b" stroke="#5a5a5a" />
            <path d="M6 6h6M9 3v6" stroke="#bbb" />
          </svg>
        </button>
      </div>
      <Toolbars />
      <main className="flex min-h-0 flex-1">
        <Palette />
        <div className="flex min-w-0 flex-1 flex-col">
          <div className="flex min-h-0 flex-1">
            <div className="mx-1 w-[15px] shrink-0">
              <div className="h-[5px] bg-[#444]" />
              <div className="bg-[#ececec] py-[2px]">
                <IconColumn items={DRAW} />
                <ToolButton label="多行文字"><span className="text-[13px] leading-[14px] text-[#111]">A</span></ToolButton>
                <ToolButton label="添加选定对象"><Ic><circle cx="4" cy="4" r="2.500" fill="#4b9c59" stroke="#2e6b38" /><circle cx="10" cy="10" r="2.500" stroke="#2a86c4" strokeWidth="1.500" /><path d="M8 3h3v3" /></Ic></ToolButton>
              </div>
            </div>
            <div className="flex min-w-0 flex-1">
              <div className="flex min-w-0 flex-1 flex-col">
                <Drawing />
                <LayoutTabs />
              </div>
              <div className="flex w-[15px] justify-center bg-[#efefef] pt-[3px]">
                <button aria-label="向上滚动" className="h-3"><ChevronUp size={10} color="#333" strokeWidth={3} /></button>
              </div>
            </div>
            <div className="mr-px ml-1 w-[15px] shrink-0">
              <div className="h-[5px] bg-[#444]" />
              <div className="bg-[#eef2f4] py-[2px]">
                <IconColumn items={MODIFY} />
              </div>
              <div className="h-[7px] bg-[#444]" />
              <div className="bg-[#ececec] py-px">
                <IconColumn items={ORDER} />
                <hr className="mx-px my-px border-[#aaa]" />
                <IconColumn items={ORDER_MORE} />
              </div>
            </div>
          </div>
          <CommandWindow />
        </div>
      </main>
      <StatusBar />
      <Brand />
    </div>
  );
}
